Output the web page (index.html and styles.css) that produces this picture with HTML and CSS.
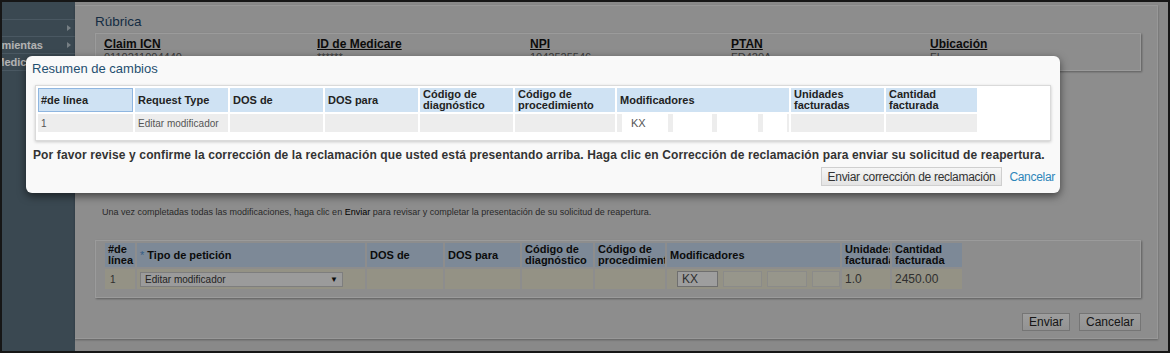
FILE: index.html
```html
<!DOCTYPE html>
<html lang="es">

<head>
  <meta charset="UTF-8">
  <meta name="viewport" content="width=device-width, initial-scale=1.0">
  <title>Resumen de cambios</title>
  <link rel="stylesheet" href="styles.css">
</head>

<body>
  <div class="screen">
    <aside class="sidebar">
      <div class="sidebar-top"></div>
      <ul class="menu">
        <li><span></span><i class="arrow"></i></li>
        <li><span>Herramientas</span><i class="arrow"></i></li>
        <li><span>Medicare</span><i class="arrow"></i></li>
      </ul>
    </aside>

    <main class="main">
      <section class="panel">
        <h2 class="panel-title">Rúbrica</h2>
        <div class="rubric">
          <div class="rubric-item"><b>Claim ICN</b><span>0110211004440</span></div>
          <div class="rubric-item"><b>ID de Medicare</b><span>******</span></div>
          <div class="rubric-item"><b>NPI</b><span>1042525546</span></div>
          <div class="rubric-item"><b>PTAN</b><span>FD420A</span></div>
          <div class="rubric-item"><b>Ubicación</b><span>FL</span></div>
        </div>

        <p class="note">Una vez completadas todas las modificaciones, haga clic en <em>Enviar</em> para revisar y completar la presentación de su solicitud de reapertura.</p>

        <div class="grid-box">
          <table class="grid">
            <colgroup>
              <col style="width:30px"><col style="width:228px"><col style="width:76px"><col style="width:75px"><col style="width:71px"><col style="width:70px"><col style="width:173px"><col style="width:48px"><col style="width:70px">
            </colgroup>
            <tr class="grid-head">
              <th>#de línea</th>
              <th><span class="req">*</span> Tipo de petición</th>
              <th>DOS de</th>
              <th>DOS para</th>
              <th>Código de diagnóstico</th>
              <th>Código de procedimiento</th>
              <th>Modificadores</th>
              <th>Unidades facturadas</th>
              <th>Cantidad facturada</th>
            </tr>
            <tr class="grid-row">
              <td>1</td>
              <td><div class="select">Editar modificador<span>▼</span></div></td>
              <td></td>
              <td></td>
              <td></td>
              <td></td>
              <td>
                <div class="mods">
                  <span class="mod mod-kx">KX</span><span class="mod"></span><span class="mod"></span><span class="mod mod-last"></span>
                </div>
              </td>
              <td>1.0</td>
              <td>2450.00</td>
            </tr>
          </table>
        </div>

        <div class="actions">
          <button class="btn">Enviar</button>
          <button class="btn">Cancelar</button>
        </div>
      </section>
    </main>

    <div class="backdrop"></div>

    <div class="modal">
      <h3 class="modal-title">Resumen de cambios</h3>
      <div class="summary-box">
        <table class="summary">
          <colgroup>
            <col style="width:95px"><col style="width:93px"><col style="width:93px"><col style="width:93px"><col style="width:93px"><col style="width:100px"><col style="width:172px"><col style="width:93px"><col style="width:91px">
          </colgroup>
          <tr class="summary-head">
            <th class="focused">#de línea</th>
            <th>Request Type</th>
            <th>DOS de</th>
            <th>DOS para</th>
            <th>Código de diagnóstico</th>
            <th>Código de procedimiento</th>
            <th>Modificadores</th>
            <th>Unidades facturadas</th>
            <th>Cantidad facturada</th>
          </tr>
          <tr class="summary-row">
            <td>1</td>
            <td>Editar modificador</td>
            <td></td>
            <td></td>
            <td></td>
            <td></td>
            <td class="mod-cell">
              <div class="boxes">
                <span class="box box-kx">KX</span><span class="box box-2"></span><span class="box box-3"></span><span class="box box-4"></span>
              </div>
            </td>
            <td></td>
            <td></td>
          </tr>
        </table>
      </div>
      <p class="confirm">Por favor revise y confirme la corrección de la reclamación que usted está presentando arriba. Haga clic en Corrección de reclamación para enviar su solicitud de reapertura.</p>
      <div class="modal-actions">
        <button class="btn-submit">Enviar corrección de reclamación</button>
        <a href="#" class="link">Cancelar</a>
      </div>
    </div>
  </div>
</body>

</html>
```

FILE: styles.css
```css
* {
  box-sizing: border-box;
}

html,
body {
  margin: 0;
  padding: 0;
}

body {
  font-family: "Liberation Sans", Arial, sans-serif;
  color: #222;
  background: #161616;
}

.screen {
  position: relative;
  width: 1170px;
  height: 353px;
  border: 2px solid #161616;
  display: flex;
  overflow: hidden;
}

/* 左側選單 */
.sidebar {
  width: 73px;
  flex-shrink: 0;
  background: #536775;
  overflow: hidden;
}

.sidebar-top {
  height: 18px;
  border-bottom: 1px solid #6a7f8d;
}

.menu {
  list-style: none;
  margin: 0;
  padding: 0;
}

.menu li {
  height: 17px;
  display: flex;
  justify-content: flex-end;
  align-items: center;
  padding-right: 4px;
  border-bottom: 1px solid #6a7f8d;
  overflow: hidden;
}

.menu span {
  flex-shrink: 0;
  margin-right: 24px;
  font-size: 11px;
  font-weight: bold;
  color: #fff;
  white-space: nowrap;
}

.arrow {
  width: 0;
  height: 0;
  border-top: 3.5px solid transparent;
  border-bottom: 3.5px solid transparent;
  border-left: 4px solid #aab6be;
}

/* 主要區塊 */
.main {
  flex: 1;
  background: #c4c4c4;
  padding: 3px 10px 12px 0;
}

.panel {
  height: 334px;
  background: #cbcbcb;
  border: 1px solid #dadada;
  border-left: none;
  box-shadow: 0 1px 2px rgba(0, 0, 0, 0.3);
  padding: 8px 16px 0 20px;
}

.panel-title {
  margin: 0;
  font-size: 13.5px;
  line-height: 16px;
  font-weight: normal;
  color: #203f60;
}

.rubric {
  margin-top: 3px;
  height: 38px;
  border: 1px solid #dedede;
  box-shadow: 1px 1px 2px rgba(0, 0, 0, 0.35);
  padding: 3px 8px;
  display: grid;
  grid-template-columns: 213px 213px 201px 199px 1fr;
}

.rubric-item b {
  display: block;
  font-size: 12px;
  line-height: 14px;
  color: #111;
  text-decoration: underline;
}

.rubric-item span {
  display: block;
  font-size: 11px;
  line-height: 13px;
  color: #555;
}

.note {
  margin: 135px 0 0 7px;
  font-size: 9px;
  line-height: 12px;
  color: #3a3a3a;
}

.note em {
  font-style: normal;
  color: #000;
}

.grid-box {
  margin-top: 22px;
  height: 58px;
  border: 1px solid #dedede;
  box-shadow: 1px 1px 2px rgba(0, 0, 0, 0.35);
  padding: 0 0 0 7px;
}

.grid {
  table-layout: fixed;
  border-collapse: separate;
  border-spacing: 2px;
  width: 860px;
}

.grid th,
.grid td {
  padding: 0 0 0 3px;
  overflow: hidden;
  text-align: left;
}

.grid-head {
  height: 24px;
}

.grid-head th {
  background: #b3c5d9;
  font-size: 11px;
  line-height: 11px;
  font-weight: bold;
  color: #111;
  vertical-align: middle;
}

.req {
  color: #4f87bf;
  font-weight: normal;
}

.grid-row {
  height: 20px;
}

.grid-row td {
  background: #d5d2bf;
  font-size: 12px;
  color: #444;
  vertical-align: middle;
}

.grid-row td:first-child {
  padding-left: 5px;
  font-size: 10px;
}

.select {
  width: 203px;
  height: 15px;
  border: 1px solid #b5b5b5;
  background: #dedede;
  font-size: 10px;
  line-height: 13px;
  padding-left: 4px;
  color: #333;
  display: flex;
  justify-content: space-between;
}

.select span {
  font-size: 8px;
  padding-right: 4px;
  color: #111;
}

.mods {
  display: flex;
  gap: 5px;
  padding-left: 7px;
}

.mod {
  width: 40px;
  height: 16px;
  border: 1px solid #c8c8c4;
  background: #d9d7c8;
}

.mod-kx {
  width: 41px;
  background: #e2e2e2;
  border-color: #a0a0a0;
  font-size: 12px;
  line-height: 14px;
  padding-left: 4px;
  color: #444;
}

.mod-last {
  width: 28px;
}

.actions {
  margin-top: 15px;
  display: flex;
  justify-content: flex-end;
  gap: 9px;
}

.btn {
  height: 18px;
  padding: 0 6px;
  border: 1px solid #a8a8a8;
  background: linear-gradient(#e2e2e2, #d2d2d2);
  font-family: "Liberation Sans", Arial, sans-serif;
  font-size: 12px;
  color: #222;
}

/* 遮罩與對話框 */
.backdrop {
  position: absolute;
  inset: 0;
  background: rgba(0, 0, 0, 0.3);
}

.modal {
  position: absolute;
  left: 24px;
  top: 54px;
  width: 1034px;
  height: 137px;
  background: #f9f9f9;
  border-radius: 6px;
  box-shadow: 0 3px 9px rgba(0, 0, 0, 0.55);
  padding: 5px 5px 0 6px;
}

.modal-title {
  margin: 0;
  font-size: 13px;
  line-height: 16px;
  font-weight: normal;
  color: #1f4f70;
}

.summary-box {
  margin: 8px 4px 0 3px;
  height: 56px;
  background: #fff;
  border: 1px solid #dadada;
  box-shadow: 0 1px 3px rgba(0, 0, 0, 0.2);
}

.summary {
  table-layout: fixed;
  border-collapse: separate;
  border-spacing: 2px;
  width: 943px;
}

.summary th,
.summary td {
  padding: 0 0 0 3px;
  text-align: left;
  overflow: hidden;
}

.summary-head {
  height: 24px;
}

.summary-head th {
  background: #cfe2f3;
  font-size: 11px;
  line-height: 11px;
  font-weight: bold;
  color: #222;
}

.summary-head th.focused {
  box-shadow: inset 0 0 0 1px #8fb6e0;
}

.summary-row {
  height: 18px;
}

.summary-row td {
  background: #ededed;
  font-size: 10px;
  color: #555;
}

.summary-row td.mod-cell {
  padding: 0 0 0 5px;
}

.boxes {
  display: flex;
  gap: 5px;
}

.box {
  height: 18px;
  background: #fff;
}

.box-kx {
  width: 46px;
  padding-left: 9px;
  font-size: 11px;
  line-height: 18px;
  color: #555;
}

.box-2 {
  width: 39px;
}

.box-3 {
  width: 41px;
}

.box-4 {
  width: 24px;
}

.confirm {
  margin: 6px 0 0 1px;
  font-size: 12px;
  line-height: 16px;
  font-weight: bold;
  letter-spacing: 0.12px;
  color: #333;
}

.modal-actions {
  margin-top: 4px;
  display: flex;
  justify-content: flex-end;
  align-items: center;
  gap: 7px;
}

.btn-submit {
  height: 19px;
  padding: 0 6px;
  border: 1px solid #cfcfcf;
  background: linear-gradient(#f6f6f6, #e4e4e4);
  font-family: "Liberation Sans", Arial, sans-serif;
  font-size: 12px;
  letter-spacing: -0.3px;
  color: #333;
}

.link {
  font-size: 12px;
  letter-spacing: -0.3px;
  color: #2e86b9;
  text-decoration: none;
}
```
